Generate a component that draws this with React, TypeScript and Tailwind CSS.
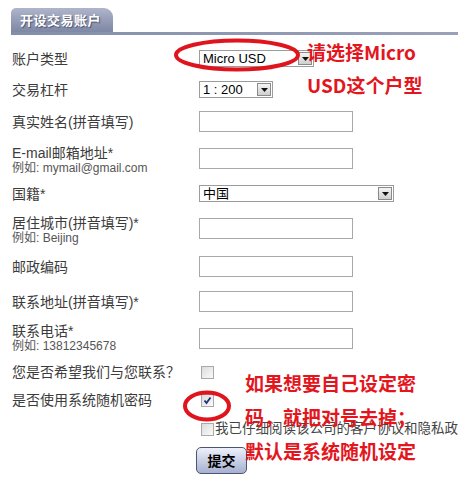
import React from "react";

const font = { fontFamily: '"Liberation Sans", "Noto Sans CJK SC", sans-serif' };

function Sel({ w, value }: { w: string; value: string }) {
  return (
    <div className={`${w} shrink-0 h-[17px] border border-[#9c9c9c] bg-white flex items-center justify-between`}>
      <span className="pl-[3px] text-[13px] leading-[15px] text-black">{value}</span>
      <div className="w-[14px] h-[13px] mr-[1px] border border-[#8a8a8a] bg-gradient-to-b from-[#f4f4f4] to-[#cfcfcf] flex items-center justify-center">
        <svg width="7" height="4" viewBox="0 0 7 4">
          <polygon points="0,0 7,0 3.5,4" fill="#111" />
        </svg>
      </div>
    </div>
  );
}

function Inp({ mt = "" }: { mt?: string }) {
  return <div className={`w-[154px] shrink-0 h-[21px] border border-[#a8a8a8] bg-white ${mt}`} />;
}

function Cb({ checked = false }: { checked?: boolean }) {
  return (
    <div className="w-[13px] h-[13px] shrink-0 border border-[#a9a9a9] bg-gradient-to-br from-[#dcdcdc] to-[#fafafa] flex items-center justify-center">
      {checked && (
        <svg width="9" height="9" viewBox="0 0 9 9">
          <path d="M1.5 4.5 L3.5 7 L7.5 1.5" stroke="#1f2f7a" strokeWidth="1.8" fill="none" />
        </svg>
      )}
    </div>
  );
}

const L = "w-[187px] shrink-0 text-[14px] leading-[16px] text-[#3c3c3c]";
const S = "text-[12px] leading-[14px] text-[#555]";

export default function App() {
  return (
    <div className="relative w-[458px] h-[495px] bg-white overflow-hidden" style={font}>
      {/* tab header */}
      <div className="pt-[8px] pl-[11px]">
        <div className="w-[102px] h-[24px] rounded-tl-[5px] rounded-tr-[9px] bg-gradient-to-b from-[#aeb5cb] to-[#7e87a4] flex items-center pl-[9px]">
          <span
            className="text-[13px] font-bold text-white tracking-[0.5px]"
            style={{ textShadow: "1px 1px 1px #4a5270", fontFamily: '"Noto Sans CJK SC", sans-serif' }}
          >
            开设交易账户
          </span>
        </div>
        <div className="h-[3px] bg-gradient-to-r from-[#858ea9] to-[#9aa2ba]" />
      </div>

      <div className="pl-[12px] flex flex-col">
        <div className="flex items-center mt-[15px] h-[17px]">
          <div className={L}>账户类型</div>
          <Sel w="w-[115px]" value="Micro USD" />
        </div>
        <div className="flex items-center mt-[14px] h-[17px]">
          <div className={L}>交易杠杆</div>
          <Sel w="w-[74px]" value="1 : 200" />
        </div>
        <div className="flex items-center mt-[13px] h-[21px]">
          <div className={L}>真实姓名(拼音填写)</div>
          <Inp />
        </div>
        <div className="flex items-start mt-[13px]">
          <div className={L}>
            <div>E-mail邮箱地址*</div>
            <div className={S}>例如: mymail@gmail.com</div>
          </div>
          <Inp mt="mt-[3px]" />
        </div>
        <div className="flex items-center mt-[10px] h-[17px]">
          <div className={L}>国籍*</div>
          <Sel w="w-[195px]" value="中国" />
        </div>
        <div className="flex items-start mt-[13px]">
          <div className={L}>
            <div>居住城市(拼音填写)*</div>
            <div className={S}>例如: Beijing</div>
          </div>
          <Inp mt="mt-[3px]" />
        </div>
        <div className="flex items-center mt-[11px] h-[21px]">
          <div className={L}>邮政编码</div>
          <Inp />
        </div>
        <div className="flex items-center mt-[14px] h-[21px]">
          <div className={L}>联系地址(拼音填写)*</div>
          <Inp />
        </div>
        <div className="flex items-start mt-[11px]">
          <div className={L}>
            <div>联系电话*</div>
            <div className={S}>例如: 13812345678</div>
          </div>
          <Inp mt="mt-[5px]" />
        </div>
        <div className="flex items-center mt-[11px] h-[16px]">
          <div className={L}>您是否希望我们与您联系？</div>
          <div className="ml-[2px]"><Cb /></div>
        </div>
        <div className="flex items-center mt-[12px] h-[16px]">
          <div className={L}>是否使用系统随机密码</div>
          <div className="ml-[2px]"><Cb checked /></div>
        </div>
        <div className="flex items-center mt-[13px] h-[16px]">
          <div className="w-[189px] shrink-0" />
          <Cb />
          <span className="ml-[1px] text-[13.5px] leading-[16px] text-[#444] whitespace-nowrap">
            我已仔细阅读该公司的客户协议和隐私政策
          </span>
        </div>
        <div className="flex mt-[10px]">
          <div className="w-[184px] shrink-0" />
          <div
            className="w-[51px] h-[27px] rounded-[5px] border border-[#4c5572] bg-gradient-to-b from-[#eef1fa] to-[#a6b0d0] flex items-center justify-center text-[14px] font-bold text-black"
            style={{ fontFamily: '"Noto Sans CJK SC", sans-serif' }}
          >
            提交
          </div>
        </div>
      </div>

      {/* annotations */}
      <svg className="absolute left-0 top-0 pointer-events-none" width="458" height="495">
        <ellipse cx="237" cy="55" rx="61" ry="14.5" fill="none" stroke="#e0141c" strokeWidth="4" />
        <ellipse cx="207" cy="406" rx="22" ry="13.5" fill="none" stroke="#e0141c" strokeWidth="4" />
      </svg>
      <div
        className="absolute left-[307px] top-[35px] text-[19px] leading-[33px] font-bold text-[#e3161e] whitespace-nowrap"
        style={{ fontFamily: '"Noto Sans CJK SC", sans-serif' }}
      >
        <div>请选择Micro</div>
        <div>USD这个户型</div>
      </div>
      <div
        className="absolute left-[245px] top-[366px] text-[19px] leading-[34px] font-bold text-[#e3161e] whitespace-nowrap"
        style={{ fontFamily: '"Noto Sans CJK SC", sans-serif' }}
      >
        <div>如果想要自己设定密</div>
        <div>码，就把对号去掉；</div>
        <div>默认是系统随机设定</div>
      </div>
    </div>
  );
}
